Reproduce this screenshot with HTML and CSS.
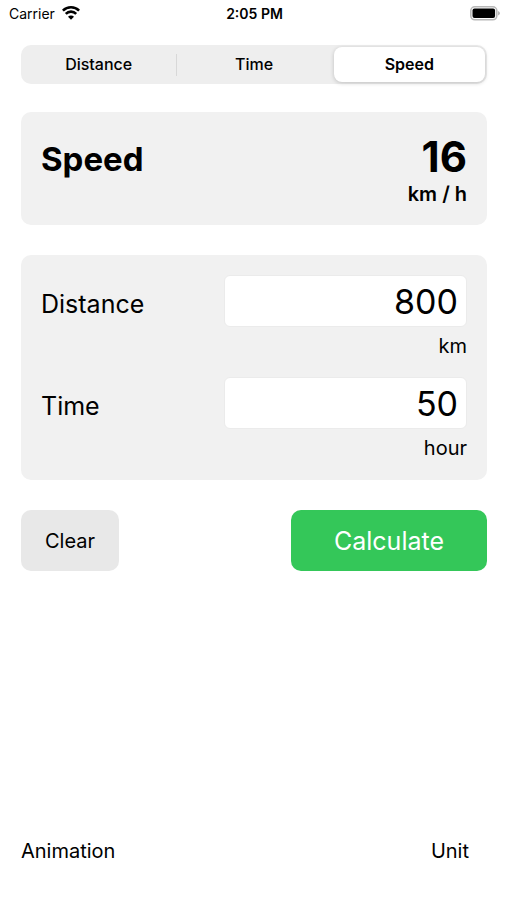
FILE: index.html
```html
<!DOCTYPE html>
<html lang="en">
<head>
<meta charset="utf-8">
<meta name="viewport" content="width=device-width, initial-scale=1">
<title>Speed calculator</title>
<link rel="stylesheet" href="styles.css">
</head>
<body>
<header class="status">
  <div class="carrier"><span>Carrier</span>
    <svg class="wifi" viewBox="0 0 18 14" aria-hidden="true"><path d="M.9 4.600a11.600 11.600 0 0 1 16.200 0M3.800 7.800a7.400 7.400 0 0 1 10.400 0" fill="none" stroke="#000" stroke-width="2.600"/><path d="M9 13.800 6 10.800a4.200 4.200 0 0 1 6 0z"/></svg>
  </div>
  <div class="clock">2:05 PM</div>
  <svg class="battery" viewBox="0 0 30 15" aria-hidden="true"><rect x=".8" y=".8" width="26" height="13" rx="4" fill="none" stroke="#b8b8b8" stroke-width="1.600"/><rect x="2.500" y="2.500" width="22.600" height="9.600" rx="2"/><path d="M28 5q2 1 2 2.300t-2 2.300z" fill="#b8b8b8"/></svg>
</header>
<main class="app">
  <nav class="segments" aria-label="Value to calculate">
    <button class="segment" type="button">Distance</button>
    <button class="segment divided" type="button">Time</button>
    <button class="segment selected" type="button" aria-pressed="true">Speed</button>
  </nav>
  <section class="card result">
    <h1 class="title">Speed</h1>
    <div class="answer"><output class="value">16</output><span class="unit">km / h</span></div>
  </section>
  <form class="form">
    <div class="card fields">
      <label class="label" for="distance">Distance</label>
      <input class="input" id="distance" type="text" inputmode="decimal" value="800">
      <span class="measure">km</span>
      <label class="label" for="time">Time</label>
      <input class="input" id="time" type="text" inputmode="decimal" value="50">
      <span class="measure">hour</span>
    </div>
    <div class="actions">
      <button class="clear" type="reset">Clear</button>
      <button class="calculate" type="button">Calculate</button>
    </div>
  </form>
  <footer class="toolbar">
    <button class="tool" type="button">Animation</button>
    <button class="tool" type="button">Unit</button>
  </footer>
</main>
</body>
</html>
```
FILE: styles.css
```css
* { box-sizing: border-box; }
body {
  margin: 0;
  min-height: 100vh;
  display: flex;
  flex-direction: column;
  background: #fff;
  color: #000;
  font-family: Inter, sans-serif;
}
button, input { font: inherit; color: inherit; margin: 0; border: 0; }
button { background: none; padding: 0; }
.status {
  display: grid;
  grid-template-columns: 1fr auto 1fr;
  align-items: center;
  height: 26px;
  padding: 0 7px 0 9px;
  font-size: 14px;
}
.carrier { display: flex; align-items: center; gap: 7px; }
.wifi { width: 18px; height: 14px; }
.clock { font-weight: 600; }
.battery { width: 30px; height: 15px; justify-self: end; }
.app {
  flex: 1;
  display: flex;
  flex-direction: column;
  padding: 19px 20px 31px 21px;
}
.segments {
  display: grid;
  grid-template-columns: repeat(3, 1fr);
  height: 39px;
  border-radius: 10px;
  background: #eee;
}
.segment { padding-bottom: 1px; font-size: 16px; font-weight: 500; border-radius: 8px; }
.divided {
  background: linear-gradient(#d8d8d8, #d8d8d8) left center / 1px 22px no-repeat;
}
.selected { margin: 2px; background: #fff; font-weight: 600; box-shadow: 0 1px 4px #0003; }
.card { border-radius: 10px; background: #f1f1f1; padding: 20px 20px 19px; }
.result {
  display: flex;
  justify-content: space-between;
  margin-top: 28px;
  min-height: 113px;
}
.title { margin: 7px 0 0; font-size: 33px; line-height: 40px; font-weight: 700; }
.answer { display: flex; flex-direction: column; align-items: flex-end; }
.value { font-size: 42px; line-height: 50px; font-weight: 700; }
.unit { font-size: 20px; line-height: 24px; font-weight: 600; }
.form { margin: 0; }
.fields {
  display: grid;
  grid-template-columns: 3fr 4fr;
  grid-template-rows: 52px 50px 52px 50px;
  margin-top: 30px;
  padding-bottom: 1px;
}
.label { font-size: 25px; align-self: center; padding-top: 6px; }
.input {
  width: 100%;
  height: 52px;
  border: 1px solid #ebebeb;
  border-radius: 6px;
  padding: 0 8px;
  background: #fff;
  font-size: 34px;
  text-align: right;
}
.measure { grid-column: 2; justify-self: end; font-size: 20px; line-height: 24px; padding-top: 7px; }
.actions { display: flex; justify-content: space-between; margin-top: 30px; }
.clear, .calculate { height: 61px; border-radius: 10px; }
.clear { width: 98px; background: #e8e8e8; font-size: 20px; }
.calculate { width: 196px; background: #34c759; color: #fff; font-size: 25px; }
.toolbar { display: flex; justify-content: space-between; margin-top: auto; padding-right: 18px; }
.tool { font-size: 20px; line-height: 36px; }
```
